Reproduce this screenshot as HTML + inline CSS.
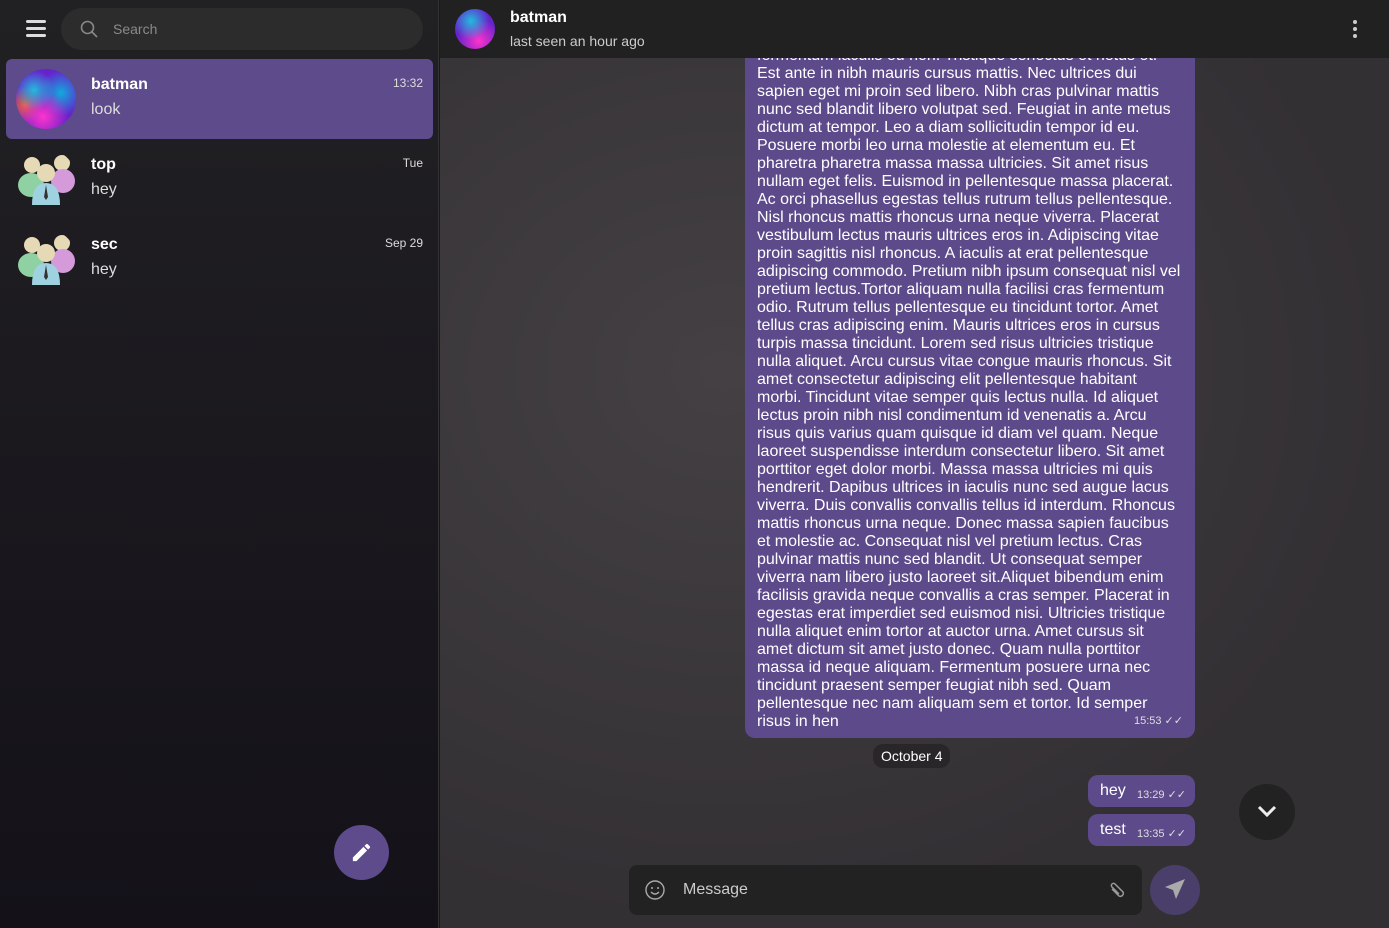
<!DOCTYPE html>
<html><head><meta charset="utf-8"><style>
*{margin:0;padding:0;box-sizing:border-box}
body{width:1389px;height:928px;overflow:hidden;font-family:"Liberation Sans",Arial,sans-serif;background:#1a181d;position:relative}
#side{position:absolute;left:0;top:0;width:439px;height:928px;background:linear-gradient(#212023,#141119);border-right:1px solid #333}
.menu{position:absolute;left:26px;top:20px;width:20px}
.menu i{display:block;height:3px;background:#ddd;border-radius:2px;margin-bottom:4px}
.search{position:absolute;left:61px;top:8px;width:362px;height:42px;border-radius:21px;background:#2c2c2c}
.search span{position:absolute;left:52px;top:13px;color:#8a8a8a;font-size:14px}
.chat{position:absolute;left:6px;width:427px;height:80px;border-radius:6px}
.chat .nm{position:absolute;left:85px;top:17px;color:#fff;font-weight:bold;font-size:16px}
.chat .ms{position:absolute;left:85px;top:42px;color:#ddd;font-size:16px}
.chat .tm{position:absolute;right:10px;top:17px;color:#ddd;font-size:12px}
.av{position:absolute;left:10px;top:10px;width:60px;height:60px;border-radius:50%}
.fab{position:absolute;left:334px;top:825px;width:55px;height:55px;border-radius:50%;background:#5e4b8b}
#main{position:absolute;left:440px;top:0;width:949px;height:928px;background:radial-gradient(ellipse at 30% 40%,#444044,#333034 70%),#383438;overflow:hidden}
#hdr{position:absolute;left:0;top:0;width:949px;height:58px;background:#212121;z-index:2}
.bub{position:absolute;left:305px;top:29px;width:450px;height:709px;background:#5d4a8a;border-radius:10px;padding:0 12px;color:#fff;font-size:16px;line-height:18px;letter-spacing:0;white-space:nowrap}
.t{font-size:11px;color:#ddd;letter-spacing:0}
.sm{position:absolute;background:#5d4a8a;border-radius:10px;color:#fff;height:32px}
</style></head><body>
<div id="side">
<div class="menu"><i></i><i></i><i></i></div>
<div class="search"><svg style="position:absolute;left:19px;top:12px" width="18" height="18" viewBox="0 0 18 18"><circle cx="7.5" cy="7.5" r="6" fill="none" stroke="#888" stroke-width="1.6"/><path d="M12 12l5 5" stroke="#888" stroke-width="1.6"/></svg><span>Search</span></div>
<div class="chat" style="top:59px;background:#5e4b8b"><div class="av" style="background:radial-gradient(circle at 30% 35%,#2bd 0,transparent 35%),radial-gradient(circle at 45% 80%,#f3c 0,transparent 45%),radial-gradient(circle at 15% 60%,#e63 0,transparent 30%),radial-gradient(circle at 75% 40%,#1ad 0,transparent 40%),#62c"></div><div class="nm">batman</div><div class="ms">look</div><div class="tm">13:32</div></div>
<div class="chat" style="top:139px"><svg class="av" viewBox="0 0 60 60"><circle cx="16" cy="16" r="8" fill="#e6d9b5"/><ellipse cx="15" cy="36" rx="13" ry="12" fill="#8fd1a3"/><circle cx="46" cy="14" r="8" fill="#e6d9b5"/><ellipse cx="47" cy="32" rx="12" ry="12" fill="#d49ad9"/><circle cx="30" cy="24" r="9" fill="#e6d9b5"/><path d="M16 56 Q16 34 30 34 Q44 34 44 56Z" fill="#9fd2e0"/><path d="M30 36 l-2 12 2 3 2-3z" fill="#333"/></svg><div class="nm">top</div><div class="ms">hey</div><div class="tm">Tue</div></div>
<div class="chat" style="top:219px"><svg class="av" viewBox="0 0 60 60"><circle cx="16" cy="16" r="8" fill="#e6d9b5"/><ellipse cx="15" cy="36" rx="13" ry="12" fill="#8fd1a3"/><circle cx="46" cy="14" r="8" fill="#e6d9b5"/><ellipse cx="47" cy="32" rx="12" ry="12" fill="#d49ad9"/><circle cx="30" cy="24" r="9" fill="#e6d9b5"/><path d="M16 56 Q16 34 30 34 Q44 34 44 56Z" fill="#9fd2e0"/><path d="M30 36 l-2 12 2 3 2-3z" fill="#333"/></svg><div class="nm">sec</div><div class="ms">hey</div><div class="tm">Sep 29</div></div>
<div class="fab"><svg style="position:absolute;left:16px;top:16px" width="23" height="23" viewBox="0 0 24 24"><path d="M3 17.25V21h3.75L17.81 9.94l-3.75-3.75L3 17.25zM20.71 7.04a1 1 0 000-1.41l-2.34-2.34a1 1 0 00-1.410 0l-1.83 1.83 3.75 3.75 1.83-1.83z" fill="#fff"/></svg></div>
</div>
<div id="main">
<div id="hdr">
<div style="position:absolute;left:15px;top:9px;width:40px;height:40px;border-radius:50%;background:radial-gradient(circle at 40% 30%,#2bd,transparent 50%),radial-gradient(circle at 60% 80%,#f3c,transparent 55%),#62c"></div>
<div style="position:absolute;left:70px;top:9px;color:#fff;font-weight:bold;font-size:16px">batman</div>
<div style="position:absolute;left:70px;top:33px;color:#ccc;font-size:14px">last seen an hour ago</div>
<div style="position:absolute;left:913px;top:20px;width:4px">
<i style="display:block;width:4px;height:4px;border-radius:50%;background:#ccc;margin-bottom:3px"></i><i style="display:block;width:4px;height:4px;border-radius:50%;background:#ccc;margin-bottom:3px"></i><i style="display:block;width:4px;height:4px;border-radius:50%;background:#ccc"></i></div>
</div>
<div class="bub"><div>&nbsp;</div>fermentum iaculis eu non. Tristique senectus et netus et.<br>Est ante in nibh mauris cursus mattis. Nec ultrices dui<br>sapien eget mi proin sed libero. Nibh cras pulvinar mattis<br>nunc sed blandit libero volutpat sed. Feugiat in ante metus<br>dictum at tempor. Leo a diam sollicitudin tempor id eu.<br>Posuere morbi leo urna molestie at elementum eu. Et<br>pharetra pharetra massa massa ultricies. Sit amet risus<br>nullam eget felis. Euismod in pellentesque massa placerat.<br>Ac orci phasellus egestas tellus rutrum tellus pellentesque.<br>Nisl rhoncus mattis rhoncus urna neque viverra. Placerat<br>vestibulum lectus mauris ultrices eros in. Adipiscing vitae<br>proin sagittis nisl rhoncus. A iaculis at erat pellentesque<br>adipiscing commodo. Pretium nibh ipsum consequat nisl vel<br>pretium lectus.Tortor aliquam nulla facilisi cras fermentum<br>odio. Rutrum tellus pellentesque eu tincidunt tortor. Amet<br>tellus cras adipiscing enim. Mauris ultrices eros in cursus<br>turpis massa tincidunt. Lorem sed risus ultricies tristique<br>nulla aliquet. Arcu cursus vitae congue mauris rhoncus. Sit<br>amet consectetur adipiscing elit pellentesque habitant<br>morbi. Tincidunt vitae semper quis lectus nulla. Id aliquet<br>lectus proin nibh nisl condimentum id venenatis a. Arcu<br>risus quis varius quam quisque id diam vel quam. Neque<br>laoreet suspendisse interdum consectetur libero. Sit amet<br>porttitor eget dolor morbi. Massa massa ultricies mi quis<br>hendrerit. Dapibus ultrices in iaculis nunc sed augue lacus<br>viverra. Duis convallis convallis tellus id interdum. Rhoncus<br>mattis rhoncus urna neque. Donec massa sapien faucibus<br>et molestie ac. Consequat nisl vel pretium lectus. Cras<br>pulvinar mattis nunc sed blandit. Ut consequat semper<br>viverra nam libero justo laoreet sit.Aliquet bibendum enim<br>facilisis gravida neque convallis a cras semper. Placerat in<br>egestas erat imperdiet sed euismod nisi. Ultricies tristique<br>nulla aliquet enim tortor at auctor urna. Amet cursus sit<br>amet dictum sit amet justo donec. Quam nulla porttitor<br>massa id neque aliquam. Fermentum posuere urna nec<br>tincidunt praesent semper feugiat nibh sed. Quam<br>pellentesque nec nam aliquam sem et tortor. Id semper<br>risus in hen<span class="t" style="position:absolute;right:12px;bottom:8px">15:53 ✓✓</span></div>
<div style="position:absolute;left:433px;top:744px;height:24px;padding:4px 8px;border-radius:10px;background:rgba(30,30,30,.6);color:#fff;font-size:14px">October 4</div>
<div class="sm" style="left:648px;top:775px;width:107px"><span style="position:absolute;left:12px;top:7px;font-size:16px">hey</span><span class="t" style="position:absolute;left:49px;top:13px">13:29 ✓✓</span></div>
<div class="sm" style="left:648px;top:814px;width:107px"><span style="position:absolute;left:12px;top:7px;font-size:16px">test</span><span class="t" style="position:absolute;left:49px;top:13px">13:35 ✓✓</span></div>
<div style="position:absolute;left:799px;top:784px;width:56px;height:56px;border-radius:50%;background:#222"><svg style="position:absolute;left:18px;top:20px" width="20" height="14" viewBox="0 0 20 14"><path d="M2 3l8 8 8-8" fill="none" stroke="#eee" stroke-width="3"/></svg></div>
<div style="position:absolute;left:189px;top:865px;width:513px;height:50px;border-radius:8px;background:#222">
<svg style="position:absolute;left:16px;top:15px" width="20" height="20" viewBox="0 0 20 20"><circle cx="10" cy="10" r="9" fill="none" stroke="#aaa" stroke-width="1.4"/><circle cx="7" cy="8" r="1" fill="#aaa"/><circle cx="13" cy="8" r="1" fill="#aaa"/><path d="M6 12q4 4 8 0" fill="none" stroke="#aaa" stroke-width="1.4"/></svg>
<span style="position:absolute;left:54px;top:16px;color:#ccc;font-size:16px">Message</span>
<svg style="position:absolute;left:477px;top:15px" width="22" height="22" viewBox="0 0 22 22"><path d="M6 9l7 7a3 3 0 004-4L9 4a2 2 0 00-3 3l7 7" fill="none" stroke="#999" stroke-width="1.5"/></svg></div>
<div style="position:absolute;left:710px;top:865px;width:50px;height:50px;border-radius:50%;background:#4a3e6a"><svg style="position:absolute;left:13px;top:12px" width="24" height="24" viewBox="0 0 24 24"><path d="M22 2L2 10l8 3 3 9z" fill="#aaa"/></svg></div>
</div>
</body></html>
